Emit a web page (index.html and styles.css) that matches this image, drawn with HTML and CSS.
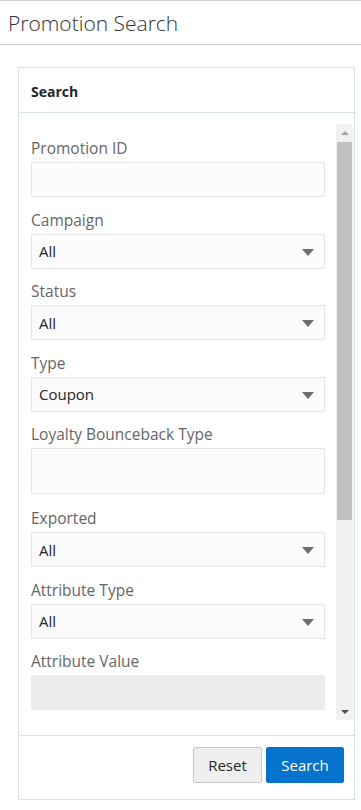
FILE: index.html
```html
<!DOCTYPE html>
<html>
<head>
<meta charset="utf-8">
<link rel="stylesheet" href="styles.css">
</head>
<body>
<header class="title-bar"><h1 class="title">Promotion Search</h1></header>
<main class="page">
  <section class="panel">
    <div class="panel-head">Search</div>
    <div class="panel-body">
      <div class="scroller">
        <div class="fields">
          <div class="field">
            <label class="label">Promotion ID</label>
            <div class="input"></div>
          </div>
          <div class="field">
            <label class="label">Campaign</label>
            <div class="input select"><span>All</span><span class="caret"></span></div>
          </div>
          <div class="field">
            <label class="label">Status</label>
            <div class="input select"><span>All</span><span class="caret"></span></div>
          </div>
          <div class="field">
            <label class="label">Type</label>
            <div class="input select"><span>Coupon</span><span class="caret"></span></div>
          </div>
          <div class="field field-tall">
            <label class="label">Loyalty Bounceback Type</label>
            <div class="input tall"></div>
          </div>
          <div class="field">
            <label class="label">Exported</label>
            <div class="input select"><span>All</span><span class="caret"></span></div>
          </div>
          <div class="field">
            <label class="label">Attribute Type</label>
            <div class="input select"><span>All</span><span class="caret"></span></div>
          </div>
          <div class="field">
            <label class="label">Attribute Value</label>
            <div class="input disabled"></div>
          </div>
        </div>
        <div class="scrollbar">
          <div class="sb-btn"><span class="sb-up"></span></div>
          <div class="sb-thumb"></div>
          <div class="sb-rest"></div>
          <div class="sb-btn"><span class="sb-down"></span></div>
        </div>
      </div>
    </div>
    <div class="panel-foot">
      <button class="btn btn-reset">Reset</button>
      <button class="btn btn-primary">Search</button>
    </div>
  </section>
</main>
</body>
</html>
```

FILE: styles.css
```css
* { box-sizing: border-box; }
html, body { margin: 0; padding: 0; background: #fff; }
body {
  font-family: "Open Sans", "Noto Sans", sans-serif;
  color: #333;
  width: 361px;
  height: 810px;
  overflow: hidden;
}
.title-bar {
  border-top: 1px solid #cfd3d6;
  border-bottom: 1px solid #c9ced2;
  height: 45px;
  display: flex;
  align-items: center;
  padding-left: 8px;
}
.title {
  margin: 0;
  font-size: 21px;
  font-weight: 300;
  color: #333;
  letter-spacing: 0;
}
.page {
  padding: 22px 6px 0 18px;
}
.panel {
  border: 1px solid #d9e0e6;
  width: 337px;
  display: flex;
  flex-direction: column;
}
.panel-head {
  height: 45px;
  border-bottom: 1px solid #d9e0e6;
  display: flex;
  align-items: center;
  padding: 3px 0 0 12px;
  font-size: 14px;
  font-weight: 700;
  color: #252525;
}
.panel-body {
  padding: 11px 0 14px 0;
  height: 622px;
}
.scroller {
  display: flex;
  height: 596px;
  overflow: hidden;
}
.fields {
  flex: 1;
  padding: 14px 11px 0 12px;
}
.field {
  display: flex;
  flex-direction: column;
  margin-bottom: 12.5px;
}
.field-tall { margin-bottom: 14px; }
.label {
  font-size: 15.5px;
  line-height: 20px;
  color: #666;
  margin-bottom: 4px;
  white-space: nowrap;
}
.input {
  height: 35px;
  border: 1px solid #e3e6e8;
  background: #fbfbfb;
  border-radius: 1px;
}
.input.tall { height: 46px; }
.input.disabled {
  background: #ececec;
  border-color: #ececec;
}
.select {
  display: flex;
  align-items: center;
  justify-content: space-between;
  padding: 0 10px 0 7px;
  font-size: 15px;
  color: #252525;
}
.caret {
  width: 0;
  height: 0;
  border-left: 6px solid transparent;
  border-right: 6px solid transparent;
  border-top: 7px solid #6d6d6d;
  margin-top: 2px;
}
.scrollbar {
  width: 17px;
  flex: 0 0 17px;
  margin-right: 1px;
  background: #f1f1f1;
  display: flex;
  flex-direction: column;
}
.sb-btn {
  height: 17px;
  display: flex;
  align-items: center;
  justify-content: center;
}
.sb-up {
  width: 0; height: 0;
  border-left: 4px solid transparent;
  border-right: 4px solid transparent;
  border-bottom: 4px solid #a3a3a3;
}
.sb-down {
  width: 0; height: 0;
  border-left: 4px solid transparent;
  border-right: 4px solid transparent;
  border-top: 4px solid #505050;
}
.sb-thumb {
  height: 378px;
  margin: 1px 1px 0 1px;
  background: #c1c1c1;
}
.sb-rest { flex: 1; }
.panel-foot {
  border-top: 1px solid #d9e0e6;
  height: 64px;
  display: flex;
  justify-content: flex-end;
  align-items: flex-start;
  gap: 4px;
  padding: 11px 10px 0 0;
}
.btn {
  height: 36px;
  font-family: "Open Sans", "Noto Sans", sans-serif;
  font-size: 15px;
  border-radius: 2px;
  padding: 0;
  cursor: pointer;
}
.btn-reset {
  width: 69px;
  background: #efefef;
  border: 1px solid #c8c8c8;
  color: #252525;
}
.btn-primary {
  width: 78px;
  background: #0572ce;
  border: 1px solid #0572ce;
  color: #fff;
}
```
